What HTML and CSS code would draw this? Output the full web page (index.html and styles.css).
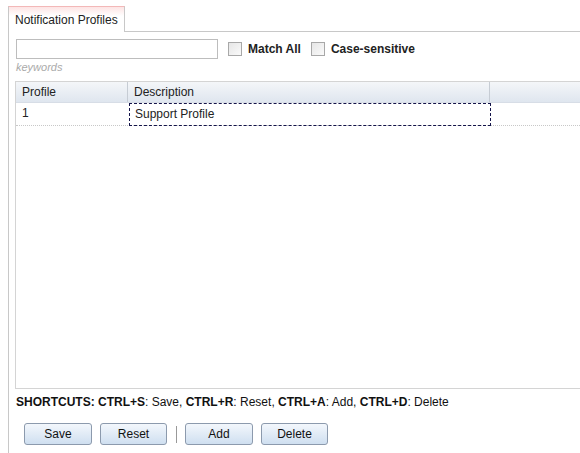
FILE: index.html
```html
<!DOCTYPE html>
<html>
<head>
<meta charset="utf-8">
<link rel="stylesheet" href="styles.css">
</head>
<body>
<div class="tabbar">
  <div class="tab">Notification Profiles</div>
  <div class="tabfill"></div>
</div>
<div class="panel">
  <div class="filter">
    <input class="search" type="text">
    <label class="check"><span class="box"></span><b>Match All</b></label>
    <label class="check"><span class="box"></span><b>Case-sensitive</b></label>
  </div>
  <div class="hint">keywords</div>
  <div class="grid">
    <div class="ghead">
      <div class="hc c1">Profile</div>
      <div class="hc c2">Description</div>
      <div class="hc c3"></div>
    </div>
    <div class="grow">
      <div class="gc c1">1</div>
      <div class="gc c2 focus">Support Profile</div>
    </div>
  </div>
  <div class="shortcuts"><b>SHORTCUTS: CTRL+S</b>: Save, <b>CTRL+R</b>: Reset, <b>CTRL+A</b>: Add, <b>CTRL+D</b>: Delete</div>
  <div class="buttons">
    <button class="btn">Save</button>
    <button class="btn">Reset</button>
    <span class="sep"></span>
    <button class="btn">Add</button>
    <button class="btn">Delete</button>
  </div>
</div>
</body>
</html>
```
FILE: styles.css
```css
html, body {
  margin: 0;
  padding: 0;
  background: #fff;
  overflow: hidden;
  width: 580px;
  height: 453px;
}
body {
  font-family: "Liberation Sans", Arial, sans-serif;
  font-size: 12px;
  color: #000;
}
.tabbar {
  display: flex;
  padding: 6px 0 0 8px;
  height: 32px;
  box-sizing: border-box;
}
.tab {
  width: 117px;
  height: 26px;
  box-sizing: border-box;
  border: 1px solid #c8c8c8;
  border-top-color: #f3b8b8;
  border-bottom: none;
  background: linear-gradient(#fde4e4 0px, #ffffff 9px);
  padding: 6px 0 0 6px;
  line-height: 14px;
  color: #222;
}
.tabfill {
  flex: 1;
  border-bottom: 1px solid #c8c8c8;
}
.panel {
  margin-left: 8px;
  border-left: 1px solid #c8c8c8;
  padding: 7px 0 0 6px;
  height: 430px;
  overflow: hidden;
}
.filter {
  display: flex;
  align-items: center;
  height: 20px;
}
.search {
  margin: 0 0 0 1px;
  width: 202px;
  height: 20px;
  box-sizing: border-box;
  border: 1px solid #bdbdbd;
  padding: 0 3px;
  font: inherit;
  outline: none;
}
.check {
  display: flex;
  align-items: center;
  margin-left: 10px;
}
.check + .check {
  margin-left: 10px;
}
.box {
  width: 14px;
  height: 14px;
  box-sizing: border-box;
  border: 1px solid #a8a8a8;
  background: linear-gradient(135deg, #e6e6e6, #fafafa);
  margin-right: 6px;
}
.check b {
  font-weight: bold;
  color: #222;
}
.hint {
  margin: 2px 0 0 1px;
  font-style: italic;
  font-size: 11px;
  color: #aaa;
  line-height: 12px;
  height: 13px;
}
.grid {
  margin-top: 7px;
  height: 308px;
  box-sizing: border-box;
  border: 1px solid #d4d4d4;
  border-right: none;
}
.ghead {
  display: flex;
  height: 21px;
  box-sizing: border-box;
  border-bottom: 1px solid #d7dde6;
}
.hc {
  height: 20px;
  line-height: 20px;
  box-sizing: border-box;
  padding-left: 6px;
  background: linear-gradient(#f4f6f9, #dfe6ef);
  border-right: 1px solid #c6ccd4;
  color: #222;
}
.c1 { width: 112px; }
.c2 { width: 362px; }
.c3 { flex: 1; border-right: none; }
.grow {
  display: flex;
  height: 23px;
  border-bottom: 1px dotted #c8c8c8;
  box-sizing: border-box;
}
.gc {
  line-height: 21px;
  padding-left: 6px;
  box-sizing: border-box;
  height: 23px;
  color: #222;
}
.focus {
  border: 1px dashed #14144a;
  padding-left: 5px;
  margin-left: 1px;
  width: 362px;
}
.shortcuts {
  margin: 6px 0 0 1px;
  line-height: 14px;
  color: #111;
}
.buttons {
  display: flex;
  align-items: center;
  margin: 14px 0 0 9px;
}
.btn {
  font: inherit;
  width: 68px;
  height: 22px;
  box-sizing: border-box;
  border: 1px solid #8c9aad;
  border-radius: 3px;
  background: linear-gradient(#f3f7fc, #cfdff0);
  color: #111;
  padding: 0;
  margin-right: 8px;
}
.btn:nth-of-type(2), .btn:nth-of-type(4) { width: 67px; }
.sep {
  width: 1px;
  height: 17px;
  background: #999;
  margin: 0 8px 0 1px;
}
```
